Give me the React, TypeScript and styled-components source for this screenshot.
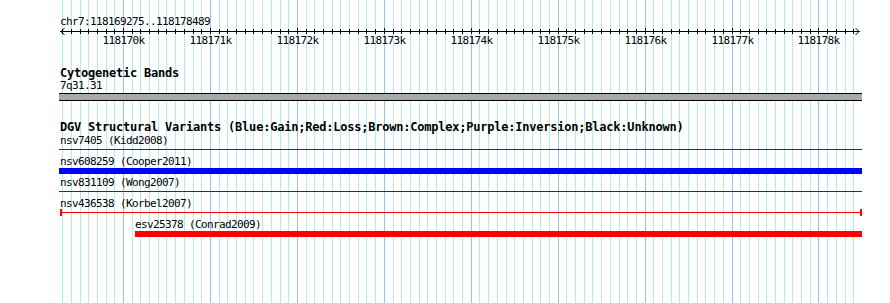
import React from 'react';
import styled, { createGlobalStyle } from 'styled-components';

const START = 118169275;
const END = 118178489;
const X0 = 60;
const PX_PER_BP = 801 / (END - START);
const xOf = (bp: number) => X0 + (bp - START) * PX_PER_BP;
const TRACK_LEFT = 59;
const TRACK_RIGHT = 862;

const MINOR = '#afeeee';
const MAJOR = '#8ec8ea';
const MONO = '"DejaVu Sans Mono", "Liberation Mono", monospace';

const GlobalStyle = createGlobalStyle`
  html, body { margin: 0; padding: 0; background: #fff; }
  body { font-family: ${MONO}; color: #000; }
`;

const Page = styled.div`
  position: relative;
  width: 890px;
  height: 303px;
  overflow: hidden;
  background: #fff;
`;

const GridLayer = styled.svg`
  position: absolute;
  top: 0;
  left: 0;
  width: 890px;
  height: 303px;
`;

const Content = styled.div`
  position: relative;
  display: flex;
  flex-direction: column;
`;

const RulerSvg = styled.svg`
  display: block;
  width: 890px;
  height: 48px;
  font-family: ${MONO};
  font-size: 11px;
  letter-spacing: -0.62px;
`;

const Section = styled.section<{ $gap: number }>`
  display: flex;
  flex-direction: column;
  margin-top: ${(p) => p.$gap}px;
  padding-left: ${TRACK_LEFT}px;
  width: ${TRACK_RIGHT - TRACK_LEFT}px;
`;

const TrackTitle = styled.div`
  height: 13px;
  padding-left: 1px;
  font-family: ${MONO};
  font-weight: bold;
  font-size: 12px;
  line-height: 13px;
  letter-spacing: -0.22px;
  white-space: nowrap;
`;

const SmallText = styled.div<{ $h?: number }>`
  height: ${(p) => p.$h ?? 13}px;
  font-family: ${MONO};
  font-size: 11px;
  line-height: ${(p) => p.$h ?? 13}px;
  letter-spacing: -0.62px;
  white-space: nowrap;
`;

const Band = styled.div`
  box-sizing: border-box;
  height: 8px;
  margin-top: 1px;
  border-top: 1px solid #000;
  border-bottom: 1px solid #000;
  background: #a9a9a9;
`;

const FeatureRow = styled.div`
  display: flex;
  flex-direction: column;
  height: 21px;
`;

const Lane = styled.div`
  height: 8px;
  display: flex;
  align-items: flex-start;
`;

type Kind = 'bar' | 'line' | 'capped';

const Glyph = styled.div<{ $kind: Kind; $color: string }>`
  flex: none;
  box-sizing: border-box;
  ${({ $kind, $color }) =>
    $kind === 'bar'
      ? `height: 6px; background: ${$color};`
      : $kind === 'line'
      ? `height: 1px; margin-top: 2px; background: ${$color};`
      : `height: 7px; margin-top: -1px;
         border-left: 2px solid ${$color};
         border-right: 2px solid ${$color};
         background: linear-gradient(to bottom, transparent 3px, ${$color} 3px, ${$color} 4px, transparent 4px);`}
`;

interface Feature {
  name: string;
  study: string;
  start: number;
  end: number;
  kind: Kind;
  color: string;
}

const features: Feature[] = [
  { name: 'nsv7405', study: 'Kidd2008', start: 118100000, end: 118300000, kind: 'line', color: '#4b1a78' },
  { name: 'nsv608259', study: 'Cooper2011', start: 118100000, end: 118300000, kind: 'bar', color: '#0000ff' },
  { name: 'nsv831109', study: 'Wong2007', start: 118100000, end: 118300000, kind: 'line', color: '#1e1ec8' },
  { name: 'nsv436538', study: 'Korbel2007', start: START, end: END, kind: 'capped', color: '#ff0000' },
  { name: 'esv25378', study: 'Conrad2009', start: 118170138, end: 118300000, kind: 'bar', color: '#ff0000' },
];

const span = (f: Feature) => {
  const l = f.start < START ? TRACK_LEFT : Math.round(xOf(f.start));
  const r = f.end > END ? TRACK_RIGHT : Math.round(xOf(f.end)) + 1;
  return { l: Math.max(TRACK_LEFT, l), r: Math.min(TRACK_RIGHT, r) };
};

const gridBps: number[] = [];
for (let bp = Math.ceil(START / 100) * 100; bp <= END; bp += 100) gridBps.push(bp);

const Ruler: React.FC = () => (
  <RulerSvg viewBox="0 0 890 48">
    <text x={60} y={25}>chr7:{START}..{END}</text>
    <line x1={60} x2={860} y1={31.5} y2={31.5} stroke="#000" strokeWidth={1} shapeRendering="crispEdges" />
    <polyline points="64.5,28 61,31.5 64.5,35" fill="none" stroke="#000" strokeWidth={1} />
    <polyline points="855.5,28 859,31.5 855.5,35" fill="none" stroke="#000" strokeWidth={1} />
    {gridBps.map((bp) => {
      const x = Math.round(xOf(bp)) + 0.5;
      const major = bp % 1000 === 0;
      return (
        <line key={bp} x1={x} x2={x} y1={major ? 28 : 29} y2={34} stroke="#000" strokeWidth={1} shapeRendering="crispEdges" />
      );
    })}
    {gridBps
      .filter((bp) => bp % 1000 === 0)
      .map((bp) => (
        <text key={bp} x={Math.round(xOf(bp)) + 0.5} y={44} textAnchor="middle">
          {bp / 1000}k
        </text>
      ))}
  </RulerSvg>
);

export default function App() {
  return (
    <Page>
      <GlobalStyle />
      <GridLayer viewBox="0 0 890 303">
        {gridBps.map((bp) => {
          const x = Math.round(xOf(bp)) + 0.5;
          return (
            <line
              key={bp}
              x1={x}
              x2={x}
              y1={0}
              y2={303}
              stroke={bp % 1000 === 0 ? MAJOR : MINOR}
              strokeWidth={1}
              shapeRendering="crispEdges"
            />
          );
        })}
      </GridLayer>
      <Content>
        <Ruler />
        <Section $gap={19}>
          <TrackTitle>Cytogenetic Bands</TrackTitle>
          <SmallText $h={12} style={{ paddingLeft: 1 }}>7q31.31</SmallText>
          <Band />
        </Section>
        <Section $gap={20}>
          <TrackTitle>
            DGV Structural Variants (Blue:Gain;Red:Loss;Brown:Complex;Purple:Inversion;Black:Unknown)
          </TrackTitle>
          {features.map((f) => {
            const { l, r } = span(f);
            return (
              <FeatureRow key={f.name}>
                <SmallText style={{ paddingLeft: Math.max(1, l - TRACK_LEFT) }}>
                  {f.name} ({f.study})
                </SmallText>
                <Lane>
                  <Glyph $kind={f.kind} $color={f.color} style={{ marginLeft: l - TRACK_LEFT, width: r - l }} />
                </Lane>
              </FeatureRow>
            );
          })}
        </Section>
      </Content>
    </Page>
  );
}
